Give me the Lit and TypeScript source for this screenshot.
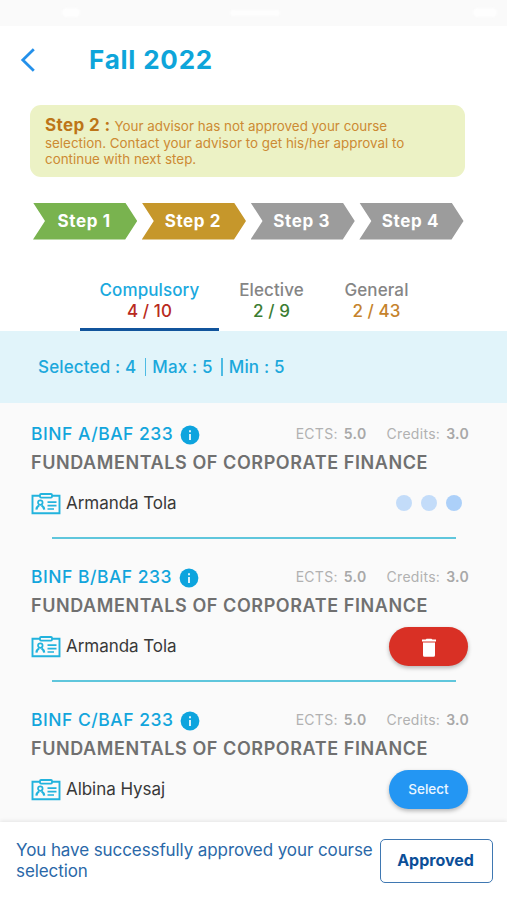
import { LitElement, html, css } from "lit";
import { customElement, property } from "lit/decorators.js";

type Action = "loading" | "remove" | "select";
interface Course {
  code: string;
  title: string;
  teacher: string;
  action: Action;
}

const COURSES: Course[] = [
  { code: "BINF A/BAF 233", title: "FUNDAMENTALS OF CORPORATE FINANCE", teacher: "Armanda Tola", action: "loading" },
  { code: "BINF B/BAF 233", title: "FUNDAMENTALS OF CORPORATE FINANCE", teacher: "Armanda Tola", action: "remove" },
  { code: "BINF C/BAF 233", title: "FUNDAMENTALS OF CORPORATE FINANCE", teacher: "Albina Hysaj", action: "select" },
];

const STEPS = [
  { label: "Step 1", kind: "done" },
  { label: "Step 2", kind: "current" },
  { label: "Step 3", kind: "todo" },
  { label: "Step 4", kind: "todo" },
];

@customElement("course-row")
export class CourseRow extends LitElement {
  @property({ attribute: false }) course!: Course;

  static styles = css`
    :host { display: block; height: 143px; box-sizing: border-box; padding: 10px 38px 0 31px; }
    .top { display: flex; align-items: center; height: 24px; }
    .code { font-size: 17.5px; line-height: 24px; font-weight: 500; color: #12a5dc; letter-spacing: 0.5px; white-space: nowrap; }
    .info { width: 20px; height: 20px; margin: 1px 0 0 7px; display: block; }
    .meta { margin: -2px 0 0 auto; display: flex; gap: 20px; font-size: 14px; color: #b1b1b1; letter-spacing: 0.3px; white-space: nowrap; }
    .meta b { font-weight: 600; color: #a8a8a8; margin-left: 6px; }
    .title { font-size: 18px; line-height: 25px; margin-top: 4px; font-weight: 600; color: #707070; letter-spacing: 0.58px; white-space: nowrap; }
    .bottom { display: flex; align-items: center; height: 40px; margin-top: 8px; }
    .badge { width: 30px; height: 24px; display: block; }
    .teacher { font-size: 17px; color: #383838; margin-left: 5px; letter-spacing: -0.05px; white-space: nowrap; }
    .action { margin-left: auto; }
    .pill { display: flex; align-items: center; justify-content: center; width: 79px; height: 39px; margin-right: 1px; border: 0; border-radius: 20px; padding: 0; font: 500 13.5px Inter, sans-serif; color: #eaf5ff; box-shadow: 0 2px 4px rgba(0, 0, 0, 0.28); }
    .remove { background: #d93025; }
    .trash { display: block; margin-top: 3px; }
    .select { background: #2396f3; }
    .dots { display: flex; gap: 9px; margin-right: 7.5px; }
    .dot { width: 16px; height: 16px; border-radius: 50%; background: #c3dcf9; }
    .dot:last-child { background: #acd0f9; }
    .rule { height: 2px; margin: 14px 13px 0 21px; background: #5fc6dc; }
  `;

  private action() {
    switch (this.course.action) {
      case "loading":
        return html`<div class="action dots"><i class="dot"></i><i class="dot"></i><i class="dot"></i></div>`;
      case "remove":
        return html`<button class="action pill remove" aria-label="Remove">
          <svg class="trash" width="16" height="20" viewBox="0 0 16 20" fill="#fff"><path d="M1 1.600h3.600l1-.9h4.800l1 .9H15v2H1zM2 4.600h12v12.700a1.500 1.500 0 0 1-1.500 1.500h-9A1.500 1.500 0 0 1 2 17.300z"/></svg>
        </button>`;
      default:
        return html`<button class="action pill select">Select</button>`;
    }
  }

  render() {
    const c = this.course;
    return html`
      <div class="top">
        <span class="code">${c.code}</span>
        <svg class="info" viewBox="0 0 20 20"><circle cx="10" cy="10" r="9.4" fill="#0da4de"/><path d="M9 9h2v6H9zM9 5.2h2v2H9z" fill="#d9f2fc"/></svg>
        <div class="meta"><span>ECTS:<b>5.0</b></span><span>Credits:<b>3.0</b></span></div>
      </div>
      <div class="title">${c.title}</div>
      <div class="bottom">
        <svg class="badge" viewBox="0 0 30 24" fill="none" stroke="#22b3dd">
          <path d="M9 4.800H1.500v17.400h27V4.800H21" stroke-width="1.900"/>
          <rect x="9" y="3" width="12" height="3.600" rx="1" stroke-width="1.800"/>
          <circle cx="9.300" cy="11.600" r="2.300" stroke-width="1.700"/>
          <path d="M5.400 18.600c.2-2.100 1.200-3.300 2.600-4.200M10.600 14.400c1.400.9 2.400 2.100 2.600 4.200" stroke-width="2.200"/>
          <path d="M16.500 11.200h9M16.500 14.600h9M16.500 18h6.500" stroke-width="1.700"/>
        </svg>
        <span class="teacher">${c.teacher}</span>
        ${this.action()}
      </div>
      <div class="rule"></div>
    `;
  }
}

@customElement("app-root")
export class AppRoot extends LitElement {
  static styles = css`
    :host { display: flex; flex-direction: column; width: 507px; height: 900px; overflow: hidden; background: #fff; font-family: Inter, sans-serif; }
    .status { flex: none; height: 25.5px; background: #fafafa; display: flex; justify-content: space-between; align-items: center; padding: 0 10px 0 62px; }
    .smudge { width: 18px; height: 9px; border-radius: 5px; background: #fefefe; filter: blur(1px); }
    .smudge.mid { width: 50px; margin-right: 44px; height: 6px; }
    .smudge.end { width: 24px; }
    .header { flex: none; height: 79.5px; display: flex; align-items: center; padding: 0 0 11px 20px; box-sizing: border-box; }
    .back { display: block; width: 16px; height: 26px; }
    h1 { margin: 0 0 0 53px; font-size: 26px; line-height: 34px; font-weight: 700; color: #0ea5da; letter-spacing: 0.8px; white-space: nowrap; }
    .note { flex: none; width: 435px; height: 72px; box-sizing: border-box; margin-left: 30px; padding: 11px 15px 0; border-radius: 11px; background: #ecf2c5; color: #cc8a33; font-size: 13.4px; line-height: 16px; letter-spacing: 0; white-space: nowrap; }
    .line { height: 16px; }
    .line.first { height: 19px; line-height: 18px; }
    .note b { font-size: 17px; font-weight: 700; color: #bd7518; letter-spacing: 0.4px; }
    .steps { flex: none; display: flex; gap: 4.6px; margin: 25.5px 0 0 33px; }
    .step { width: 104.2px; height: 37px; padding-right: 2px; display: flex; align-items: center; justify-content: center; box-sizing: border-box; clip-path: polygon(0 0, 88.5% 0, 100% 50%, 88.5% 100%, 0 100%, 11.5% 50%); color: #fff; font-size: 17px; font-weight: 700; letter-spacing: 0.6px; }
    .done { background: #79b34f; }
    .current { background: #c6972b; }
    .todo { background: #9c9c9c; }
    .tabs { flex: none; display: flex; height: 91.5px; padding-left: 80px; box-sizing: border-box; align-items: flex-end; }
    .tab { height: 51px; box-sizing: border-box; text-align: center; font-size: 17px; line-height: 21px; font-weight: 500; letter-spacing: 0.1px; color: #858585; white-space: nowrap; }
    .tab.active { width: 139px; color: #1aa9de; border-bottom: 3px solid #11549c; }
    .elective { width: 105px; }
    .general { width: 105px; }
    .red { color: #b92a20; }
    .green { color: #3b7d33; }
    .amber { color: #c5832c; }
    .summary { flex: none; height: 72px; background: #e1f4fa; display: flex; align-items: center; padding-left: 38px; color: #1ba8dc; font-size: 17px; font-weight: 500; letter-spacing: 0.15px; white-space: nowrap; }
    .bar { width: 1.5px; height: 18px; background: #4dbbe4; margin: 0 6px 0 8.5px; }
    .list { flex: 1; min-height: 0; overflow: hidden; padding-top: 9px; background: #fafafa; }
    .footer { flex: none; height: 78.5px; box-sizing: border-box; display: flex; align-items: flex-start; background: #fff; padding: 17.5px 14.5px 0 16px; box-shadow: 0 -1px 4px rgba(0, 0, 0, 0.09); z-index: 1; }
    .message { margin-top: 1px; font-size: 17px; line-height: 21px; color: #2a68a8; letter-spacing: -0.09px; white-space: nowrap; }
    .approved { flex: none; margin-left: auto; width: 113px; height: 44px; box-sizing: border-box; padding: 0 1px 2px 0; border: 1.5px solid #3f78b2; border-radius: 5px; background: #fff; font: 700 16px Inter, sans-serif; color: #0c4f98; }
  `;

  render() {
    return html`
      <div class="status"><i class="smudge"></i><i class="smudge mid"></i><i class="smudge end"></i></div>
      <div class="header">
        <svg class="back" viewBox="0 0 16 26" fill="none" stroke="#2490ea" stroke-width="2.8"><path d="M13.8 2.2 2.8 13l11 10.8"/></svg>
        <h1>Fall 2022</h1>
      </div>
      <div class="note">
        <div class="line first"><b>Step 2 :</b> Your advisor has not approved your course</div>
        <div class="line">selection. Contact your advisor to get his/her approval to</div>
        <div class="line">continue with next step.</div>
      </div>
      <div class="steps">${STEPS.map((s) => html`<div class="step ${s.kind}">${s.label}</div>`)}</div>
      <div class="tabs">
        <div class="tab active">Compulsory<div class="red">4 / 10</div></div>
        <div class="tab elective">Elective<div class="green">2 / 9</div></div>
        <div class="tab general">General<div class="amber">2 / 43</div></div>
      </div>
      <div class="summary">
        <span>Selected : 4</span><i class="bar"></i><span>Max : 5</span><i class="bar"></i><span>Min : 5</span>
      </div>
      <div class="list">${COURSES.map((c) => html`<course-row .course=${c}></course-row>`)}</div>
      <div class="footer">
        <div class="message">You have successfully approved your course<br />selection</div>
        <button class="approved">Approved</button>
      </div>
    `;
  }
}
